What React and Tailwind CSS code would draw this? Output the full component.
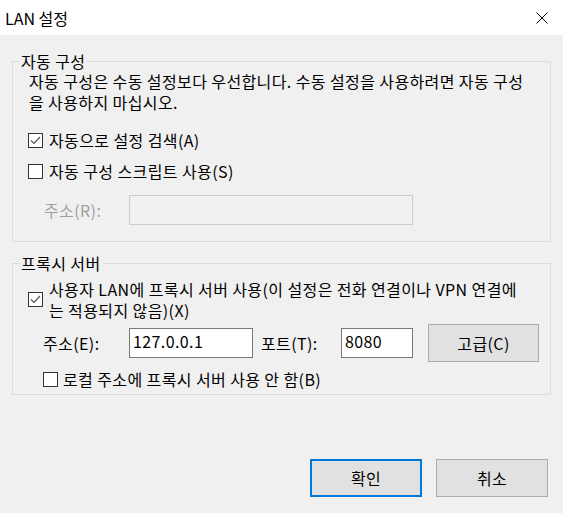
import React, { useState } from 'react';

const Checkbox = ({ checked, onChange }) => (
  <button
    type="button"
    onClick={onChange}
    className="w-[15px] h-[15px] shrink-0 border border-[#333333] bg-white flex items-center justify-center"
  >
    {checked && (
      <svg width="13" height="13" viewBox="0 0 13 13">
        <polyline points="2,6.5 5,9.5 11,3" fill="none" stroke="#555555" strokeWidth="1.2" />
      </svg>
    )}
  </button>
);

const GroupBox = ({ title, className = '', children }) => (
  <fieldset className={`mx-[12px] border border-[#dcdcdc] ${className}`}>
    <legend className="ml-[6px] px-[2px] leading-[20px]">{title}</legend>
    {children}
  </fieldset>
);

export default function App() {
  const [autoDetect, setAutoDetect] = useState(true);
  const [useScript, setUseScript] = useState(false);
  const [useProxy, setUseProxy] = useState(true);
  const [bypassLocal, setBypassLocal] = useState(false);
  const [address, setAddress] = useState('127.0.0.1');
  const [port, setPort] = useState('8080');

  return (
    <div className="w-[563px] h-[513px] bg-[#f0f0f0] flex flex-col text-[16px] tracking-[0.4px] text-black font-['Noto_Sans_CJK_KR',sans-serif]">
      {/* 제목 표시줄 */}
      <div className="h-[35px] bg-white flex items-center justify-between pl-[5px] pr-[15px]">
        <span className="leading-[20px] tracking-normal">LAN 설정</span>
        <svg width="12" height="12" viewBox="0 0 12 12">
          <path d="M0.5 0.5 L11.5 11.5 M11.5 0.5 L0.5 11.5" stroke="#000" strokeWidth="1" />
        </svg>
      </div>

      {/* 자동 구성 */}
      <GroupBox title="자동 구성" className="mt-[16px] h-[191px]">
        <p className="pl-[16px] leading-[21px] whitespace-nowrap">
          자동 구성은 수동 설정보다 우선합니다. 수동 설정을 사용하려면 자동 구성
          <br />
          을 사용하지 마십시오.
        </p>
        <div className="pl-[15px] mt-[17px] flex items-center gap-[6px] h-[20px]">
          <Checkbox checked={autoDetect} onChange={() => setAutoDetect(!autoDetect)} />
          <span>자동으로 설정 검색(A)</span>
        </div>
        <div className="pl-[15px] mt-[11px] flex items-center gap-[6px] h-[20px]">
          <Checkbox checked={useScript} onChange={() => setUseScript(!useScript)} />
          <span>자동 구성 스크립트 사용(S)</span>
        </div>
        <div className="pl-[31px] mt-[14px] flex items-center">
          <span className="w-[85px] text-[#a0a0a0]">주소(R):</span>
          <input
            disabled
            className="w-[284px] h-[30px] border border-[#cccccc] bg-[#f0f0f0] outline-none"
          />
        </div>
      </GroupBox>

      {/* 프록시 서버 */}
      <GroupBox title="프록시 서버" className="mt-[11px] h-[142px]">
        <div className="pl-[15px] mt-[6px] flex items-center gap-[6px]">
          <Checkbox checked={useProxy} onChange={() => setUseProxy(!useProxy)} />
          <span className="leading-[20.5px] whitespace-nowrap">
            사용자 LAN에 프록시 서버 사용(이 설정은 전화 연결이나 VPN 연결에
            <br />
            는 적용되지 않음)(X)
          </span>
        </div>
        <div className="pl-[30px] mt-[4px] flex items-center">
          <span className="w-[86px]">주소(E):</span>
          <input
            value={address}
            onChange={(e) => setAddress(e.target.value)}
            className="w-[124px] h-[30px] border border-[#7a7a7a] bg-white px-[3px] pb-[4px] outline-none"
          />
          <span className="ml-[8px] w-[80px]">포트(T):</span>
          <input
            value={port}
            onChange={(e) => setPort(e.target.value)}
            className="w-[72px] h-[30px] border border-[#7a7a7a] bg-white px-[3px] pb-[4px] outline-none"
          />
          <button className="ml-[15px] w-[111px] h-[38px] bg-[#e1e1e1] border border-[#adadad]">
            고급(C)
          </button>
        </div>
        <div className="pl-[30px] mt-[7px] flex items-center gap-[5px] h-[20px]">
          <Checkbox checked={bypassLocal} onChange={() => setBypassLocal(!bypassLocal)} />
          <span>로컬 주소에 프록시 서버 사용 안 함(B)</span>
        </div>
      </GroupBox>

      {/* 버튼 */}
      <div className="mt-[64px] flex justify-end gap-[14px] pr-[15px]">
        <button className="w-[112px] h-[38px] bg-[#e1e1e1] border-2 border-[#0078d7]">확인</button>
        <button className="w-[112px] h-[38px] bg-[#e1e1e1] border border-[#adadad]">취소</button>
      </div>
    </div>
  );
}
